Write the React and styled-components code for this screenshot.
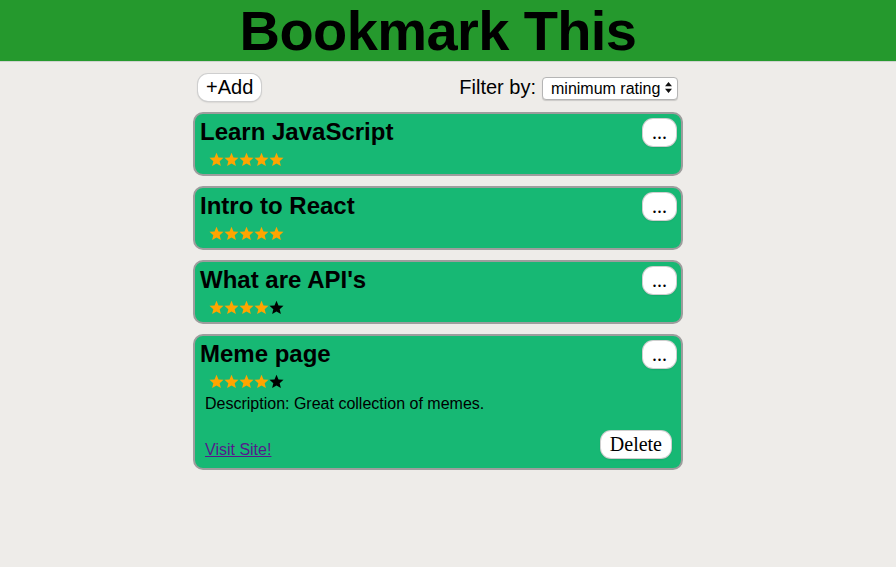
import React from "react";
import styled, { createGlobalStyle } from "styled-components";

const Global = createGlobalStyle`
  html, body { margin: 0; padding: 0; }
  body {
    background: #eeece9;
    font-family: "Liberation Sans", Arial, sans-serif;
    color: #000;
  }
`;

const Header = styled.header`
  height: 61px;
  background: #25992d;
  border-bottom: 1px solid #cfd3cf;
  padding-right: 20px;
  display: flex;
  justify-content: center;
  align-items: center;
`;

const Title = styled.h1`
  margin: 0;
  font-size: 56px;
  line-height: 61px;
  font-weight: 700;
  letter-spacing: -0.6px;
`;

const Main = styled.main`
  width: 490px;
  margin: 12px auto 0;
  position: relative;
  left: -10px;
`;

const Toolbar = styled.div`
  height: 27px;
  padding: 0 5px;
  display: flex;
  justify-content: space-between;
  align-items: center;
`;

const PillButton = styled.button`
  height: 27px;
  padding: 0 ${(p) => p.$pad || 8}px;
  border: none;
  border-radius: 10px;
  background: #fff;
  box-shadow: 0 0 0 1px #cfcfcf, 0 1px 2px rgba(0, 0, 0, 0.25);
  font-family: ${(p) =>
    p.$serif ? '"Liberation Serif", "Times New Roman", serif' : '"Liberation Sans", Arial, sans-serif'};
  font-size: 20px;
  line-height: 27px;
  color: #000;
  cursor: pointer;
`;

const FilterGroup = styled.label`
  display: flex;
  align-items: center;
  gap: 6px;
  font-size: 20px;
`;

const SelectWrap = styled.div`
  position: relative;
  width: 136px;
  height: 23px;
`;

const Select = styled.select`
  appearance: none;
  -webkit-appearance: none;
  width: 100%;
  height: 100%;
  box-sizing: border-box;
  border: 1px solid #b5b5b5;
  border-radius: 4px;
  background: #fff;
  box-shadow: 0 1px 1px rgba(0, 0, 0, 0.15);
  font-family: "Liberation Sans", Arial, sans-serif;
  font-size: 16px;
  padding: 0 0 0 8px;
  color: #000;
`;

const Arrows = styled.svg`
  position: absolute;
  right: 6px;
  top: 6px;
  pointer-events: none;
`;

const List = styled.div`
  margin-top: 11px;
  display: flex;
  flex-direction: column;
  gap: 10px;
`;

const Card = styled.article`
  background: #17b874;
  border: 2px solid #9d9d9d;
  border-radius: 10px;
  padding: 4px 5px 6px 5px;
`;

const CardTop = styled.div`
  display: flex;
  justify-content: space-between;
  align-items: flex-start;
`;

const CardTitle = styled.h2`
  margin: 0;
  font-size: 24px;
  line-height: 28px;
  font-weight: 700;
`;

const MoreButton = styled(PillButton)`
  margin-top: 1px;
  width: 33px;
  padding: 0;
  text-align: center;
`;

const Stars = styled.div`
  margin-top: 4px;
  height: 18px;
  padding-left: 9px;
  display: flex;
  align-items: center;
`;

const Details = styled.div`
  padding: 0 5px 4px 5px;
`;

const Description = styled.p`
  margin: 5px 0 0;
  font-size: 16px;
  line-height: 18px;
`;

const Footer = styled.div`
  margin-top: 18px;
  display: flex;
  justify-content: space-between;
  align-items: flex-end;
`;

const Link = styled.a`
  font-size: 16px;
  line-height: 18px;
  margin-bottom: -1px;
  color: #551a8b;
`;

const Star = ({ on }) => (
  <svg width="15" height="15" viewBox="0 0 24 24">
    <path
      d="M12 1.2l3.2 7.4 8 .7-6.1 5.3 1.9 7.9L12 18.3l-7 4.2 1.9-7.9L.8 9.3l8-.7z"
      fill={on ? "#ffa500" : "#000"}
    />
  </svg>
);

const Rating = ({ value }) => (
  <Stars>
    {[1, 2, 3, 4, 5].map((i) => (
      <Star key={i} on={i <= value} />
    ))}
  </Stars>
);

const bookmarks = [
  { title: "Learn JavaScript", rating: 5 },
  { title: "Intro to React", rating: 5 },
  { title: "What are API's", rating: 4 },
  {
    title: "Meme page",
    rating: 4,
    expanded: true,
    description: "Description: Great collection of memes.",
  },
];

export default function App() {
  return (
    <>
      <Global />
      <Header>
        <Title>Bookmark This</Title>
      </Header>
      <Main>
        <Toolbar>
          <PillButton>+Add</PillButton>
          <FilterGroup>
            Filter by:
            <SelectWrap>
              <Select defaultValue="min">
                <option value="min">minimum rating</option>
                <option value="1">1</option>
                <option value="2">2</option>
                <option value="3">3</option>
                <option value="4">4</option>
                <option value="5">5</option>
              </Select>
              <Arrows width="7" height="11" viewBox="0 0 7 11">
                <path d="M3.5 0L7 4.3H0z M3.5 11L0 6.7h7z" fill="#111" />
              </Arrows>
            </SelectWrap>
          </FilterGroup>
        </Toolbar>
        <List>
          {bookmarks.map((b) => (
            <Card key={b.title}>
              <CardTop>
                <CardTitle>{b.title}</CardTitle>
                <MoreButton $serif>...</MoreButton>
              </CardTop>
              <Rating value={b.rating} />
              {b.expanded && (
                <Details>
                  <Description>{b.description}</Description>
                  <Footer>
                    <Link href="#">Visit Site!</Link>
                    <PillButton $serif $pad={9}>Delete</PillButton>
                  </Footer>
                </Details>
              )}
            </Card>
          ))}
        </List>
      </Main>
    </>
  );
}
